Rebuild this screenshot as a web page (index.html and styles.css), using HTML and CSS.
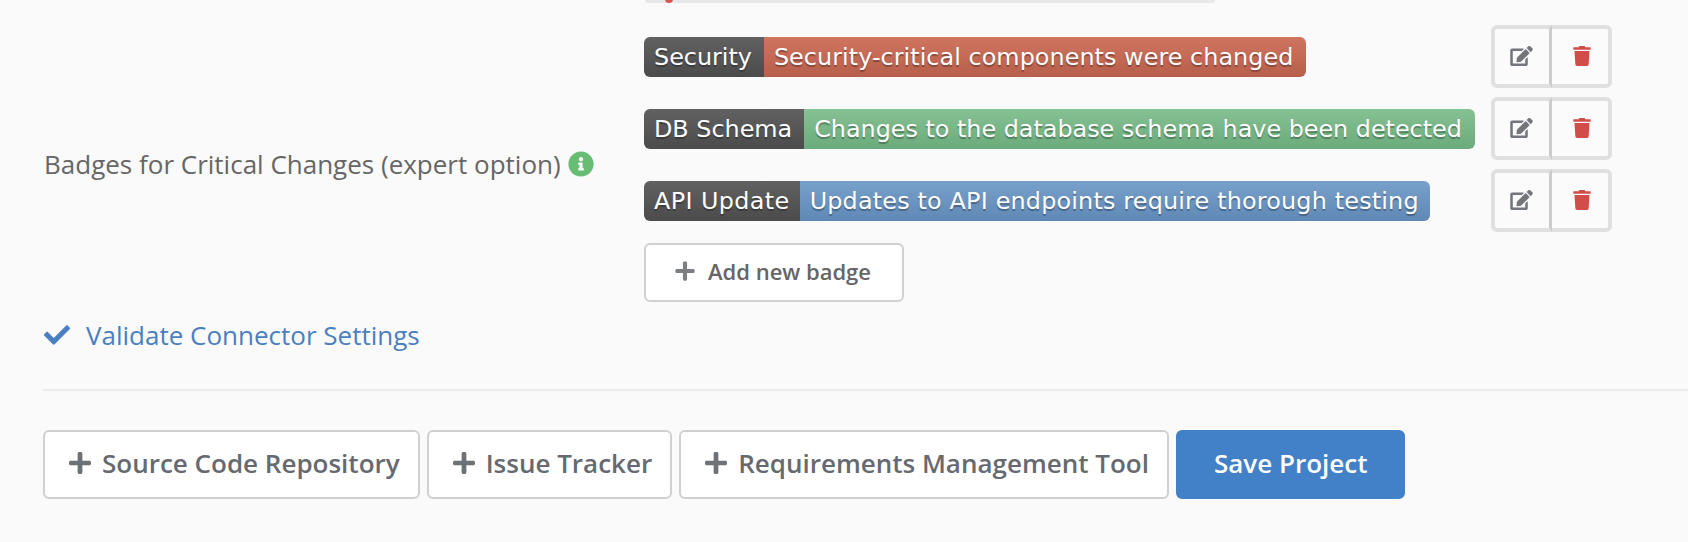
FILE: index.html
```html
<!DOCTYPE html>
<html lang="en">
<head>
  <meta charset="UTF-8">
  <title>Project Settings</title>
  <link rel="stylesheet" href="styles.css">
</head>
<body>

<svg class="sprite" aria-hidden="true">
  <symbol id="i-edit" viewBox="0 0 576 512"><path d="M402.6 83.2l90.2 90.2c3.8 3.8 3.8 10 0 13.8L274.4 405.6l-92.8 10.3c-12.4 1.4-22.9-9.1-21.5-21.5l10.3-92.8L388.8 83.2c3.8-3.8 10-3.8 13.8 0zm162-22.9l-48.8-48.8c-15.2-15.2-39.9-15.2-55.2 0l-35.4 35.4c-3.8 3.8-3.8 10 0 13.8l90.2 90.2c3.8 3.8 10 3.8 13.8 0l35.4-35.4c15.2-15.3 15.2-40 0-55.2zM384 346.2V448H64V128h229.8c3.2 0 6.2-1.3 8.5-3.5l40-40c7.6-7.6 2.2-20.5-8.5-20.5H48C21.5 64 0 85.5 0 112v352c0 26.5 21.5 48 48 48h352c26.5 0 48-21.5 48-48V306.2c0-10.7-12.9-16-20.5-8.5l-40 40c-2.2 2.3-3.5 5.3-3.5 8.5z"/></symbol>
  <symbol id="i-trash" viewBox="0 0 448 512"><path d="M432 32H312l-9.4-18.7A24 24 0 0 0 281.1 0H166.8a23.72 23.72 0 0 0-21.4 13.3L136 32H16A16 16 0 0 0 0 48v32a16 16 0 0 0 16 16h416a16 16 0 0 0 16-16V48a16 16 0 0 0-16-16zM53.2 467a48 48 0 0 0 47.9 45h245.8a48 48 0 0 0 47.9-45L416 128H32z"/></symbol>
  <symbol id="i-plus" viewBox="0 0 448 512"><path d="M416 208H272V64c0-17.67-14.33-32-32-32h-32c-17.67 0-32 14.33-32 32v144H32c-17.67 0-32 14.33-32 32v32c0 17.67 14.33 32 32 32h144v144c0 17.67 14.33 32 32 32h32c17.67 0 32-14.33 32-32V304h144c17.67 0 32-14.33 32-32v-32c0-17.67-14.33-32-32-32z"/></symbol>
  <symbol id="i-check" viewBox="0 0 512 512"><path d="M173.898 439.404l-166.4-166.4c-9.997-9.997-9.997-26.206 0-36.204l36.203-36.204c9.997-9.998 26.207-9.998 36.204 0L192 312.69 432.095 72.596c9.997-9.997 26.207-9.997 36.204 0l36.203 36.204c9.997 9.997 9.997 26.206 0 36.204l-294.4 294.401c-9.998 9.997-26.207 9.997-36.204-.001z"/></symbol>
  <symbol id="i-info" viewBox="0 0 512 512"><path d="M256 8C119.043 8 8 119.083 8 256c0 136.997 111.043 248 248 248s248-111.003 248-248C504 119.083 392.957 8 256 8zm0 110c23.196 0 42 18.804 42 42s-18.804 42-42 42-42-18.804-42-42 18.804-42 42-42zm56 254c0 6.627-5.373 12-12 12h-88c-6.627 0-12-5.373-12-12v-24c0-6.627 5.373-12 12-12h12v-64h-12c-6.627 0-12-5.373-12-12v-24c0-6.627 5.373-12 12-12h64c6.627 0 12 5.373 12 12v100h12c6.627 0 12 5.373 12 12v24z"/></symbol>
</svg>

<div class="clipped-input"><span class="clipped-mark"></span></div>

<div class="form-row">
  <div class="form-label">
    <span>Badges for Critical Changes (expert option)</span>
    <svg class="icon icon-info"><use href="#i-info"/></svg>
  </div>

  <div class="form-field">
    <div class="badge-row">
      <div class="badge">
        <span class="badge-key">Security</span>
        <span class="badge-value red">Security-critical components were changed</span>
      </div>
      <div class="badge-actions">
        <button class="action-btn"><svg class="icon icon-edit"><use href="#i-edit"/></svg></button>
        <button class="action-btn"><svg class="icon icon-trash"><use href="#i-trash"/></svg></button>
      </div>
    </div>

    <div class="badge-row">
      <div class="badge">
        <span class="badge-key">DB Schema</span>
        <span class="badge-value green">Changes to the database schema have been detected</span>
      </div>
      <div class="badge-actions">
        <button class="action-btn"><svg class="icon icon-edit"><use href="#i-edit"/></svg></button>
        <button class="action-btn"><svg class="icon icon-trash"><use href="#i-trash"/></svg></button>
      </div>
    </div>

    <div class="badge-row">
      <div class="badge badge-wide">
        <span class="badge-key">API Update</span>
        <span class="badge-value blue">Updates to API endpoints require thorough testing</span>
      </div>
      <div class="badge-actions">
        <button class="action-btn"><svg class="icon icon-edit"><use href="#i-edit"/></svg></button>
        <button class="action-btn"><svg class="icon icon-trash"><use href="#i-trash"/></svg></button>
      </div>
    </div>

    <button class="btn-add"><svg class="icon icon-plus-sm"><use href="#i-plus"/></svg>Add new badge</button>
  </div>
</div>

<a class="validate-link" href="#"><svg class="icon icon-check"><use href="#i-check"/></svg>Validate Connector Settings</a>

<hr class="divider">

<div class="footer-buttons">
  <button class="btn"><svg class="icon icon-plus"><use href="#i-plus"/></svg>Source Code Repository</button>
  <button class="btn"><svg class="icon icon-plus"><use href="#i-plus"/></svg>Issue Tracker</button>
  <button class="btn"><svg class="icon icon-plus"><use href="#i-plus"/></svg>Requirements Management Tool</button>
  <button class="btn btn-primary">Save Project</button>
</div>

</body>
</html>
```

FILE: styles.css
```css
html, body {
  height: 100%;
}
body {
  margin: 0;
  padding-left: 43px;
  background: #fafafa;
  color: #666;
  font-family: "Open Sans", sans-serif;
  overflow: hidden;
}
button {
  font-family: inherit;
  cursor: pointer;
}
.sprite {
  display: none;
}
.icon {
  display: block;
  fill: currentColor;
  flex: none;
}

/* bottom edge of the field scrolled off above */
.clipped-input {
  position: relative;
  width: 570px;
  height: 3px;
  margin-left: 602px;
  background: #e8e8e8;
  border-radius: 0 0 6px 6px;
}
.clipped-mark {
  position: absolute;
  left: 20px;
  top: -3px;
  width: 8px;
  height: 6px;
  background: #d9534f;
  border-radius: 0 0 4px 4px;
}

.form-row {
  display: flex;
  align-items: center;
  margin-top: 22px;
}
.form-label {
  width: 601px;
  display: flex;
  align-items: center;
  gap: 7px;
  font-size: 26px;
  color: #666;
}
.form-label span {
  margin-left: 1px;
}
.icon-info {
  width: 26px;
  height: 26px;
  color: #68bd74;
}

.badge-row {
  display: grid;
  grid-template-columns: 847px auto;
  align-items: center;
  height: 63px;
  margin-bottom: 9px;
}
.badge {
  display: inline-flex;
  justify-self: start;
  height: 40px;
  border-radius: 6px;
  overflow: hidden;
  font-family: "DejaVu Sans", sans-serif;
  font-size: 23.85px;
  line-height: 40px;
  color: #fff;
  text-shadow: 0 2px 1px rgba(0, 0, 0, 0.3);
  white-space: nowrap;
}
.badge-key {
  padding: 0 12px 0 10px;
  background: linear-gradient(#616161, #4b4b4b);
}
.badge-value {
  padding: 0 13px 0 10px;
}
.badge-wide .badge-key {
  padding-right: 10px;
  letter-spacing: 0.4px;
}
.badge-wide .badge-value {
  padding-right: 11px;
  letter-spacing: 0.19px;
}
.red {
  letter-spacing: 0.06px;
  background: linear-gradient(#d0745f, #b75f4c);
}
.green {
  background: linear-gradient(#86c193, #6bab7b);
}
.blue {
  background: linear-gradient(#78a0cb, #5f88b5);
}

.badge-actions {
  display: flex;
}
.action-btn {
  width: 61px;
  height: 63px;
  padding: 0 0 2px;
  display: flex;
  align-items: center;
  justify-content: center;
  background: #fbfbfb;
  border: 4px solid #e0e0e0;
}
.action-btn:first-child {
  border-right: 3px solid #ccc;
  border-radius: 6px 0 0 6px;
}
.action-btn:last-child {
  width: 60px;
  border-left: 0;
  border-radius: 0 6px 6px 0;
}
.icon-edit {
  width: 23px;
  height: 20px;
  margin-right: 2px;
  color: #72757a;
}
.icon-trash {
  width: 18px;
  height: 20px;
  margin-left: 3px;
  color: #d14d47;
}

.btn-add {
  display: flex;
  align-items: center;
  width: 260px;
  height: 59px;
  padding: 0 0 3px 29px;
  margin-top: 11px;
  background: #fff;
  border: 2px solid #d0d0d0;
  border-radius: 6px;
  color: #666;
  font-size: 22px;
  font-weight: 600;
}
.icon-plus-sm {
  width: 20px;
  height: 22px;
  margin-right: 13px;
  color: #7c7e82;
}

.validate-link {
  display: flex;
  align-items: center;
  gap: 16px;
  margin-top: 15px;
  font-size: 26px;
  line-height: 36px;
  color: #4a7fc1;
  text-decoration: none;
}
.icon-check {
  width: 26px;
  height: 26px;
  margin-left: 1px;
  color: #4a7fc1;
}

.divider {
  height: 2px;
  margin: 36px 0 0;
  border: 0;
  background: #ececec;
}

.footer-buttons {
  display: flex;
  gap: 7px;
  margin-top: 39px;
}
.btn {
  display: flex;
  align-items: center;
  height: 69px;
  padding: 0 18px 3px 24px;
  background: #fff;
  border: 2px solid #d0d0d0;
  border-radius: 6px;
  color: #666a70;
  font-size: 26px;
  font-weight: 600;
  white-space: nowrap;
}
.icon-plus {
  width: 22px;
  height: 26px;
  margin-right: 11px;
  color: #6e7176;
}
.btn-primary {
  padding: 0 36px 3px;
  background: #4280c8;
  border-color: #4280c8;
  color: #fff;
}
```
